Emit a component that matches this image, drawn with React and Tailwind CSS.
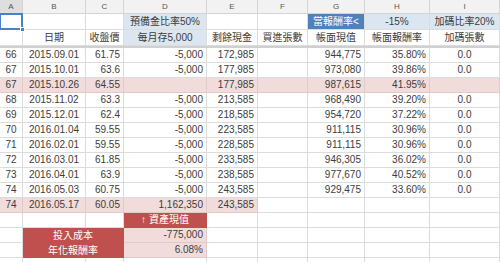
const W = ["w-[23px]", "w-[63px]", "w-[38px]", "w-[83px]", "w-[51px]", "w-[50px]", "w-[57px]", "w-[65px]", "w-[70px]"];
const ALIGN = ["c", "c", "r", "r", "r", "c", "r", "r", "c"];
const LETTERS = ["A", "B", "C", "D", "E", "F", "G", "H", "I"];

const ROWS = [
  ["66", "2015.09.01", "61.75", "-5,000", "172,985", "", "944,775", "35.80%", "0.0"],
  ["67", "2015.10.01", "63.6", "-5,000", "177,985", "", "973,080", "39.86%", "0.0"],
  ["67", "2015.10.26", "64.55", "", "177,985", "", "987,615", "41.95%", ""],
  ["68", "2015.11.02", "63.3", "-5,000", "213,585", "", "968,490", "39.20%", "0.0"],
  ["69", "2015.12.01", "62.4", "-5,000", "218,585", "", "954,720", "37.22%", "0.0"],
  ["70", "2016.01.04", "59.55", "-5,000", "223,585", "", "911,115", "30.96%", "0.0"],
  ["71", "2016.02.01", "59.55", "-5,000", "228,585", "", "911,115", "30.96%", "0.0"],
  ["72", "2016.03.01", "61.85", "-5,000", "233,585", "", "946,305", "36.02%", "0.0"],
  ["73", "2016.04.01", "63.9", "-5,000", "238,585", "", "977,670", "40.52%", "0.0"],
  ["74", "2016.05.03", "60.75", "-5,000", "243,585", "", "929,475", "33.60%", "0.0"],
  ["74", "2016.05.17", "60.05", "1,162,350", "243,585", "", "", "", ""],
];

function Cell({ i, children, align, bg = "", bc = "border-[#dcdcdc]", extra = "" }) {
  const a = align || ALIGN[i];
  const al = a === "r" ? "justify-end pr-[3px]" : a === "l" ? "justify-start pl-[3px]" : "justify-center";
  return (
    <div className={`${W[i]} shrink-0 h-full flex items-center whitespace-nowrap border-r border-b ${bc} ${bg} ${al} ${extra}`}>
      {children}
    </div>
  );
}

export default function App() {
  return (
    <div
      className="w-[500px] h-[262px] overflow-hidden bg-white text-[10px] text-[#3c3c3c] leading-none"
      style={{ fontFamily: "'Liberation Sans', 'Noto Sans CJK TC', sans-serif" }}
    >
      {/* column letters */}
      <div className="flex h-[14px] bg-[#f2f2f2] text-[8px] text-[#555]">
        {LETTERS.map((l, i) => (
          <div
            key={l}
            className={`${W[i]} shrink-0 h-full flex items-center justify-center border-r border-b border-[#d4d4d4] ${i === 0 ? "bg-[#dedede]" : ""}`}
          >
            {l}
          </div>
        ))}
      </div>

      {/* header row 1 */}
      <div className="flex h-[16px]">
        <div className="w-[23px] shrink-0 h-full relative border-r border-b border-[#dcdcdc]">
          <div className="absolute -left-px -top-px right-[-1px] bottom-[-1px] border-2 border-[#4a7fc9]" />
          <div className="absolute right-[-3px] bottom-[-3px] w-[5px] h-[5px] bg-[#4a7fc9] border border-white" />
        </div>
        <Cell i={1} />
        <Cell i={2} />
        <Cell i={3} align="c" bg="bg-[#dce6f1]">預備金比率50%</Cell>
        <Cell i={4} />
        <Cell i={5} />
        <Cell i={6} align="c" bg="bg-[#4f81bd] text-white">當報酬率&lt;</Cell>
        <Cell i={7} align="c" bg="bg-[#dce6f1]">-15%</Cell>
        <Cell i={8} align="c" bg="bg-[#dce6f1]">加碼比率20%</Cell>
      </div>

      {/* header row 2 */}
      <div className="flex h-[16px]">
        <Cell i={0} />
        <Cell i={1} align="c">日期</Cell>
        <Cell i={2} align="c">收盤價</Cell>
        <Cell i={3} align="c" bg="bg-[#dce6f1]">每月存5,000</Cell>
        <Cell i={4} align="c">剩餘現金</Cell>
        <Cell i={5} align="c">買進張數</Cell>
        <Cell i={6} align="c">帳面現值</Cell>
        <Cell i={7} align="c">帳面報酬率</Cell>
        <Cell i={8} align="c">加碼張數</Cell>
      </div>
      <div className="h-[2px] bg-[#d0d0d0]" />

      {/* data rows */}
      {ROWS.map((r, ri) => {
        const fullPink = ri === 2;
        const partPink = ri === ROWS.length - 1;
        return (
          <div key={ri} className="flex h-[15px]">
            {r.map((v, i) => {
              const pink = fullPink || (partPink && i <= 4);
              return (
                <Cell
                  key={i}
                  i={i}
                  bg={pink ? "bg-[#f2dcdb]" : ""}
                  bc={pink ? "border-[#e3c9c8]" : "border-[#dcdcdc]"}
                >
                  {v}
                </Cell>
              );
            })}
          </div>
        );
      })}

      {/* summary */}
      <div className="flex h-[15px]">
        <Cell i={0} />
        <Cell i={1} />
        <Cell i={2} />
        <Cell i={3} align="c" bg="bg-[#c0504d] text-white" bc="border-[#c0504d]">↑ 資產現值</Cell>
        <Cell i={4} />
        <Cell i={5} />
        <Cell i={6} />
        <Cell i={7} />
        <Cell i={8} />
      </div>
      <div className="flex h-[30px]">
        <div className="flex flex-col">
          <div className="flex h-[15px]"><Cell i={0} /></div>
          <div className="flex h-[15px]"><Cell i={0} /></div>
        </div>
        <div className="w-[101px] shrink-0 flex flex-col bg-[#c0504d] text-white border-r border-[#c0504d]">
          <div className="h-[15px] flex items-center justify-center">投入成本</div>
          <div className="h-[15px] flex items-center justify-center">年化報酬率</div>
        </div>
        <div className="flex flex-col">
          <div className="flex h-[15px]">
            <Cell i={3} bg="bg-[#f2dcdb]" bc="border-[#e3c9c8]">-775,000</Cell>
            <Cell i={4} />
            <Cell i={5} />
            <Cell i={6} />
            <Cell i={7} />
            <Cell i={8} />
          </div>
          <div className="flex h-[15px]">
            <Cell i={3} bg="bg-[#f2dcdb]" bc="border-[#e3c9c8]">6.08%</Cell>
            <Cell i={4} />
            <Cell i={5} />
            <Cell i={6} />
            <Cell i={7} />
            <Cell i={8} />
          </div>
        </div>
      </div>
      <div className="flex h-[15px]">
        {W.map((w, i) => (
          <Cell key={i} i={i} />
        ))}
      </div>
    </div>
  );
}
